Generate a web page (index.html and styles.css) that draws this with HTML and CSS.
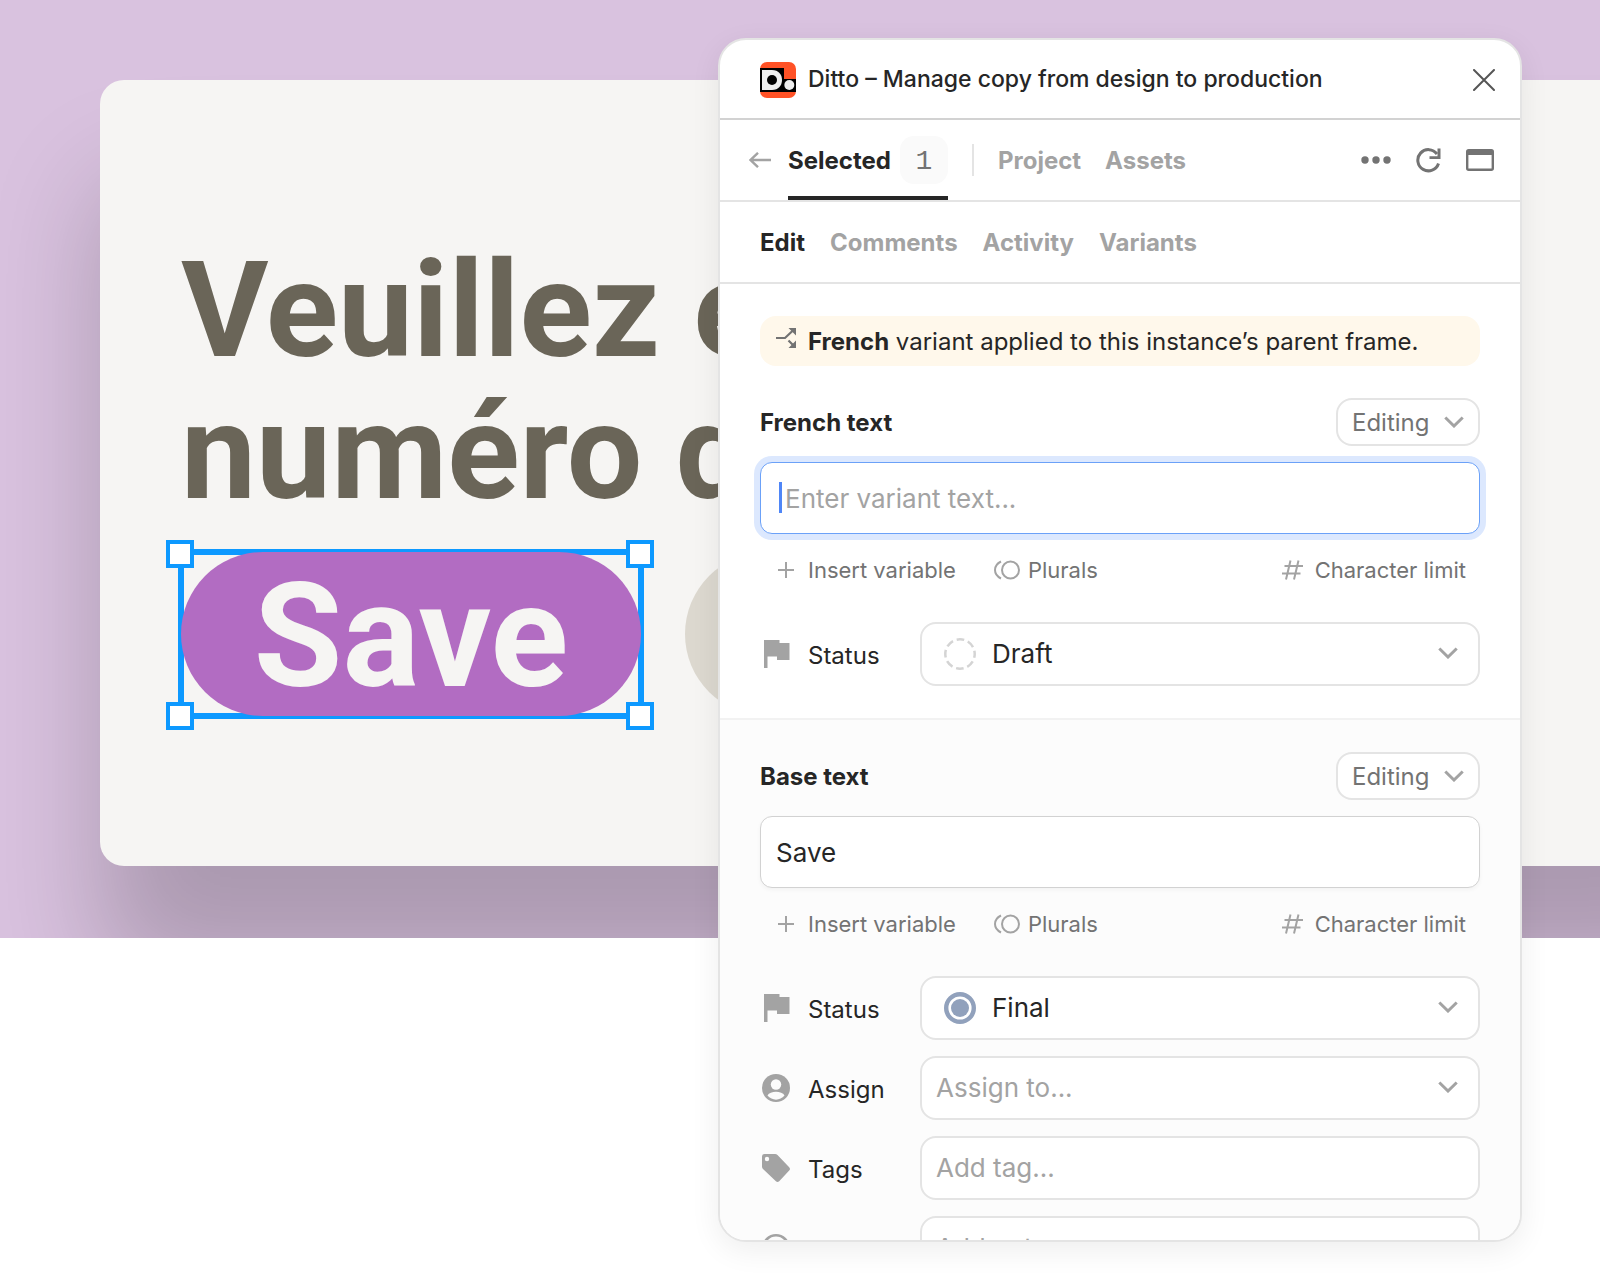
FILE: index.html
```html
<!DOCTYPE html>
<html lang="en">

<head>
    <meta charset="UTF-8">
    <meta name="viewport" content="width=device-width, initial-scale=1.0">
    <title>Ditto</title>
    <link rel="stylesheet" href="styles.css">
</head>

<body>
    <!-- icons used more than once -->
    <svg class="sprite" aria-hidden="true">
        <symbol id="chevron" viewBox="0 0 20 12"><path d="M1.3 1.5 10 10l8.700-8.500" fill="none" stroke="currentColor" stroke-width="3" /></symbol>
        <symbol id="plus" viewBox="0 0 16 16"><path d="M8 0v16M0 8h16" stroke="currentColor" stroke-width="2" /></symbol>
        <symbol id="plurals" viewBox="0 0 26 20">
            <g fill="none" stroke="currentColor" stroke-width="2"><circle cx="16.500" cy="10" r="8.500" /><path d="M7 1.500C-1 5.500-1 14.500 7 18.500" /></g>
        </symbol>
        <symbol id="hash" viewBox="0 0 21 20"><path d="M8.500.5 4 19.500M16.500.5 12 19.500M2.500 6H21M0 13.500h18.500" fill="none" stroke="currentColor" stroke-width="2" /></symbol>
        <symbol id="flag" viewBox="0 0 26 28"><path d="M0 0h15.500v3H25.500v17H13v-3.500H3.500V28H0z" fill="currentColor" /></symbol>
    </svg>

    <section class="hero">
        <div class="card">
            <h1>Veuillez e<br>numéro d</h1>
            <div class="actions">
                <div class="selection">
                    <button class="pill save">Save</button>
                    <span class="handle tl"></span>
                    <span class="handle tr"></span>
                    <span class="handle bl"></span>
                    <span class="handle br"></span>
                </div>
                <button class="pill other" aria-label="Cancel"></button>
            </div>
        </div>
    </section>

    <main class="panel">
        <header class="titlebar">
            <svg class="logo" viewBox="0 0 36 36">
                <rect width="36" height="36" rx="7" fill="#ff5226" />
                <path d="M0 6h24v11h12v13H0z" fill="#000" />
                <path d="M2 8h10c6.500 0 10 4.500 10 10s-3.500 10-10 10H2z" fill="#eee" />
                <circle cx="12" cy="18" r="5" fill="#000" />
                <circle cx="29.300" cy="23" r="5" fill="#eee" />
            </svg>
            <span class="title">Ditto – Manage copy from design to production</span>
            <button class="icon-btn close" aria-label="Close">
                <svg width="22" height="22" viewBox="0 0 22 22"><path d="m1 1 20 20M21 1 1 21" stroke="currentColor" stroke-width="2" stroke-linecap="round" /></svg>
            </button>
        </header>

        <nav class="tabs">
            <button class="icon-btn back" aria-label="Back">
                <svg width="22" height="16" viewBox="0 0 22 16"><path d="M9 .800 1.500 8 9 15.200M1.500 8H22" fill="none" stroke="currentColor" stroke-width="2.400" /></svg>
            </button>
            <button class="tab active">Selected <span class="count">1</span></button>
            <span class="divider"></span>
            <button class="tab">Project</button>
            <button class="tab">Assets</button>
            <div class="tools">
                <button class="icon-btn" aria-label="More">
                    <svg width="30" height="8" viewBox="0 0 30 8"><g fill="currentColor"><circle cx="4" cy="4" r="3.700" /><circle cx="15" cy="4" r="3.700" /><circle cx="26" cy="4" r="3.700" /></g></svg>
                </button>
                <button class="icon-btn" aria-label="Refresh">
                    <svg width="25" height="25" viewBox="0 0 25 25"><path d="M22.500 15.500A10.600 10.600 0 1 1 21 6" fill="none" stroke="currentColor" stroke-width="3" /><path d="M24.500.5v10.500H13.500V8.200h8V.5z" fill="currentColor" /></svg>
                </button>
                <button class="icon-btn" aria-label="Window">
                    <svg width="28" height="22" viewBox="0 0 28 22"><rect x="1.200" y="1.200" width="25.600" height="19.600" rx="1.500" fill="none" stroke="currentColor" stroke-width="2.400" /><path d="M1 1h26v5H1z" fill="currentColor" /></svg>
                </button>
            </div>
        </nav>

        <nav class="subtabs">
            <button class="tab active">Edit</button>
            <button class="tab">Comments</button>
            <button class="tab">Activity</button>
            <button class="tab">Variants</button>
        </nav>

        <section class="block">
            <p class="notice">
                <svg width="20" height="20" viewBox="0 0 20 20"><g fill="none" stroke="currentColor" stroke-width="2.200"><path d="M0 10h9l9-8.500M12.500 12.500l6 6" /></g><path d="M12.500 0H20v7.500zM20 12.500V20h-7.500z" fill="currentColor" /></svg>
                <span><b>French</b> variant applied to this instance’s parent frame.</span>
            </p>

            <div class="head">
                <label for="french">French text</label>
                <button class="mode">Editing <svg width="20" height="12"><use href="#chevron" /></svg></button>
            </div>
            <div class="field focused">
                <span class="caret"></span>
                <input type="text" id="french" placeholder="Enter variant text...">
            </div>
            <div class="extras">
                <button><svg width="16" height="16"><use href="#plus" /></svg>Insert variable</button>
                <button class="plurals"><svg width="26" height="20"><use href="#plurals" /></svg>Plurals</button>
                <button class="limit"><svg width="21" height="20"><use href="#hash" /></svg>Character limit</button>
            </div>

            <div class="row">
                <svg class="flag" width="26" height="28"><use href="#flag" /></svg>
                <label for="status1">Status</label>
                <div class="control">
                    <svg class="dot" viewBox="0 0 32 32"><circle cx="16" cy="16" r="14.700" fill="none" stroke="#d4d4d4" stroke-width="2.500" stroke-dasharray="7.700 3.845" stroke-dashoffset="3.850" /></svg>
                    <select id="status1" class="with-dot"><option>Draft</option></select>
                    <svg class="chevron"><use href="#chevron" /></svg>
                </div>
            </div>
        </section>

        <section class="block base">
            <div class="head">
                <label for="base">Base text</label>
                <button class="mode">Editing <svg width="20" height="12"><use href="#chevron" /></svg></button>
            </div>
            <div class="field">
                <input type="text" id="base" value="Save">
            </div>
            <div class="extras">
                <button><svg width="16" height="16"><use href="#plus" /></svg>Insert variable</button>
                <button class="plurals"><svg width="26" height="20"><use href="#plurals" /></svg>Plurals</button>
                <button class="limit"><svg width="21" height="20"><use href="#hash" /></svg>Character limit</button>
            </div>

            <div class="row">
                <svg class="flag" width="26" height="28"><use href="#flag" /></svg>
                <label for="status2">Status</label>
                <div class="control">
                    <svg class="dot" viewBox="0 0 32 32"><circle cx="16" cy="16" r="13.800" fill="#fff" stroke="#91a1bc" stroke-width="4.400" /><circle cx="16" cy="16" r="9" fill="#91a1bc" /></svg>
                    <select id="status2" class="with-dot"><option>Final</option></select>
                    <svg class="chevron"><use href="#chevron" /></svg>
                </div>
            </div>
            <div class="row">
                <svg width="28" height="28" viewBox="0 0 28 28"><circle cx="14" cy="14" r="14" fill="currentColor" /><circle cx="14" cy="10.500" r="5.200" fill="#fcfcfc" /><path d="M5.500 21.500C8 16.500 20 16.500 22.500 21.500 18 27 10 27 5.500 21.500z" fill="#fcfcfc" /></svg>
                <label for="assign">Assign</label>
                <div class="control">
                    <select id="assign" class="empty"><option>Assign to...</option></select>
                    <svg class="chevron"><use href="#chevron" /></svg>
                </div>
            </div>
            <div class="row">
                <svg width="28" height="28" viewBox="0 0 28 28"><path d="M2.500 0H13q1.500 0 2.500 1l11.700 12.200q1.600 1.800 0 3.300L17.200 27.200q-1.700 1.600-3.300 0L1 15Q0 14 0 12.500V2.500Q0 0 2.500 0z" fill="currentColor" /><circle cx="5" cy="5" r="2.200" fill="#fcfcfc" /></svg>
                <label for="tags">Tags</label>
                <div class="control"><input type="text" id="tags" placeholder="Add tag..."></div>
            </div>
            <div class="row">
                <svg width="28" height="28" viewBox="0 0 28 28"><circle cx="14" cy="14" r="12.700" fill="none" stroke="currentColor" stroke-width="2.600" /></svg>
                <label for="notes">Notes</label>
                <div class="control"><input type="text" id="notes" placeholder="Add note..."></div>
            </div>
        </section>
    </main>
</body>

</html>
```
FILE: styles.css
```css
* {
    box-sizing: border-box;
}
body {
    margin: 0;
    min-height: 100vh;
    position: relative;
    overflow: hidden;
    background-color: #fff;
    color: #262626;
    font-family: Inter, "Liberation Sans", sans-serif;
    font-size: 24px;
}
button, input, select {
    font: inherit;
    color: inherit;
    margin: 0;
}
button {
    padding: 0;
    border: none;
    background: none;
    display: flex;
    align-items: center;
}
svg {
    display: block;
    flex: none;
}
.sprite {
    position: absolute;
    width: 0;
    height: 0;
}

/* design canvas behind the plugin window */
.hero {
    padding: 80px 0 72px 100px;
    overflow: hidden;
    background-color: #d9c2df;
}
.card {
    margin-right: -120px;
    padding: 160px 0 150px 81px;
    border-radius: 24px;
    background-color: #f6f5f3;
    box-shadow: 0 105px 110px rgba(0, 0, 0, 0.21);
    font-family: Roboto, "Liberation Sans", sans-serif;
}
.card h1 {
    margin: 0 0 28px;
    font-size: 134px;
    line-height: 142px;
    font-weight: 700;
    white-space: nowrap;
    color: #6a6558;
}
.actions {
    display: flex;
    gap: 44px;
}
.selection {
    position: relative;
    width: 460px;
}
.selection::before {
    content: "";
    position: absolute;
    inset: -3px;
    border: 6px solid #0d99ff;
}
.pill {
    position: relative;
    justify-content: center;
    width: 460px;
    height: 164px;
    padding-top: 4px;
    border-radius: 82px;
    font-size: 144px;
    font-weight: 700;
}
.save {
    background-color: #b26cc2;
    color: #f6f5f3;
}
.other {
    background-color: #dcd8cf;
}
.handle {
    position: absolute;
    width: 28px;
    height: 28px;
    border: 4px solid #0d99ff;
    background-color: #fff;
}
.tl { top: -12px; left: -15px; }
.tr { top: -12px; right: -13px; }
.bl { bottom: -14px; left: -15px; }
.br { bottom: -14px; right: -13px; }

/* plugin window */
.panel {
    position: absolute;
    top: 38px;
    right: 78px;
    bottom: 38px;
    width: 804px;
    overflow: hidden;
    border: 2px solid #e4e4e4;
    border-radius: 28px;
    background-color: #fff;
    box-shadow: 0 8px 30px rgba(0, 0, 0, 0.07);
}
.titlebar {
    display: flex;
    align-items: center;
    gap: 12px;
    height: 80px;
    padding: 2px 25px 0 40px;
    border-bottom: 2px solid #d2d2d2;
}
.logo {
    width: 36px;
    height: 36px;
}
.title {
    padding-bottom: 2px;
    font-size: 23px;
    font-weight: 500;
}
.icon-btn {
    color: #737373;
}
.close {
    margin-left: auto;
    color: #555;
}
.tabs, .subtabs {
    display: flex;
    align-items: center;
    height: 82px;
    padding: 0 26px 0 40px;
    border-bottom: 2px solid #e4e4e4;
}
.tabs {
    padding-left: 29px;
    gap: 24px;
}
.subtabs {
    gap: 25px;
}
.tab {
    height: 80px;
    font-weight: 700;
    color: #a3a3a3;
}
.tab.active {
    color: #262626;
}
.back {
    margin-right: -7px;
    color: #a3a3a3;
}
.tabs .active {
    gap: 9px;
    padding-top: 4px;
    border-bottom: 4px solid #262626;
}
.count {
    width: 48px;
    height: 48px;
    border-radius: 14px;
    background-color: #fafafa;
    color: #737373;
    font: 28px/52px "Liberation Mono", monospace;
    text-align: center;
}
.divider {
    width: 2px;
    height: 32px;
    background-color: #e4e4e4;
}
.tools {
    display: flex;
    align-items: center;
    gap: 25px;
    margin-left: auto;
}
.block {
    padding: 32px 40px;
}
.base {
    border-top: 2px solid #f2f2f2;
    background-color: #fcfcfc;
}
.notice {
    display: flex;
    align-items: center;
    gap: 12px;
    margin: 0 0 32px;
    padding: 1px 16px 0;
    border-radius: 16px;
    background-color: #fff8eb;
    line-height: 49px;
}
.notice svg {
    margin-bottom: 8px;
    color: #737373;
}
.notice b {
    font-weight: 700;
}
.head {
    display: flex;
    align-items: center;
    justify-content: space-between;
    margin-bottom: 16px;
    font-weight: 700;
}
.mode {
    justify-content: space-between;
    width: 144px;
    height: 48px;
    padding: 0 14px;
    border: 2px solid #e4e4e4;
    border-radius: 16px;
    background-color: #fff;
    color: #737373;
    font-weight: 400;
}
.mode svg {
    color: #a3a3a3;
}
.field {
    position: relative;
}
.field input {
    display: block;
    width: 100%;
    height: 72px;
    padding: 0 15px;
    border: 1px solid #d2d2d2;
    border-radius: 12px;
    background-color: #fff;
    font-size: 26px;
    box-shadow: 0 2px 4px rgba(0, 0, 0, 0.04);
}
.focused input {
    padding-left: 24px;
    border-color: #6ba1f8;
    box-shadow: 0 0 0 6px #dce8fe;
}
.caret {
    position: absolute;
    top: 20px;
    left: 19px;
    width: 3px;
    height: 31px;
    background-color: #4f86f7;
}
::placeholder {
    color: #a3a3a3;
    opacity: 1;
}
.extras {
    display: flex;
    margin: 20px 0 36px;
    padding: 0 14px 0 18px;
    font-size: 22px;
    color: #737373;
}
.extras button {
    gap: 14px;
    height: 32px;
}
.extras .plurals {
    gap: 8px;
    margin-left: 38px;
}
.extras .limit {
    gap: 12px;
    margin-left: auto;
}
.extras svg {
    color: #a3a3a3;
}
.row {
    display: grid;
    grid-template-columns: 48px 112px 1fr;
    align-items: center;
    color: #a3a3a3;
}
.row + .row {
    margin-top: 16px;
}
.row > svg {
    margin-left: 2px;
}
.row > .flag {
    margin-left: 4px;
}
.row label {
    padding-top: 3px;
    color: #262626;
}
.control {
    position: relative;
}
.control select, .control input {
    display: block;
    width: 100%;
    height: 64px;
    padding: 0 14px 2px;
    appearance: none;
    border: 2px solid #e4e4e4;
    border-radius: 16px;
    background-color: #fff;
    color: #262626;
    font-size: 26px;
}
.control .with-dot {
    padding-left: 70px;
}
.control .empty {
    color: #a3a3a3;
}
.dot {
    position: absolute;
    top: 16px;
    left: 24px;
    width: 32px;
    height: 32px;
}
.chevron {
    position: absolute;
    top: 25px;
    right: 22px;
    width: 20px;
    height: 12px;
}
```
